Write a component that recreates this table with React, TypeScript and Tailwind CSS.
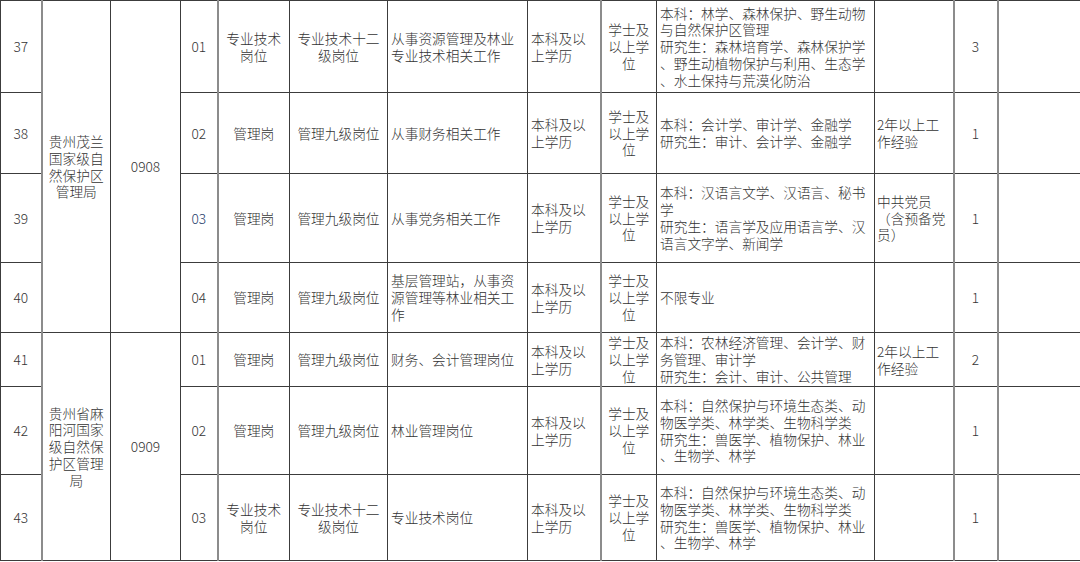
const FONT = { fontFamily: '"Noto Sans CJK SC", "Noto Sans", sans-serif' };

type Row = {
  no: string;
  code: string;
  type: string[];
  level: string[];
  duty: string[];
  edu: string[];
  degree: string[];
  major: string[];
  other: string[];
  count: string;
  h: string;
};

const rows: Row[] = [
  {
    no: "37",
    code: "01",
    type: ["专业技术", "岗位"],
    level: ["专业技术十二", "级岗位"],
    duty: ["从事资源管理及林业", "专业技术相关工作"],
    edu: ["本科及以", "上学历"],
    degree: ["学士及", "以上学", "位"],
    major: [
      "本科：林学、森林保护、野生动物",
      "与自然保护区管理",
      "研究生：森林培育学、森林保护学",
      "、野生动植物保护与利用、生态学",
      "、水土保持与荒漠化防治",
    ],
    other: [],
    count: "3",
    h: "h-[92px]",
  },
  {
    no: "38",
    code: "02",
    type: ["管理岗"],
    level: ["管理九级岗位"],
    duty: ["从事财务相关工作"],
    edu: ["本科及以", "上学历"],
    degree: ["学士及", "以上学", "位"],
    major: ["本科：会计学、审计学、金融学", "研究生：审计、会计学、金融学"],
    other: ["2年以上工", "作经验"],
    count: "1",
    h: "h-[81px]",
  },
  {
    no: "39",
    code: "03",
    type: ["管理岗"],
    level: ["管理九级岗位"],
    duty: ["从事党务相关工作"],
    edu: ["本科及以", "上学历"],
    degree: ["学士及", "以上学", "位"],
    major: [
      "本科：汉语言文学、汉语言、秘书",
      "学",
      "研究生：语言学及应用语言学、汉",
      "语言文字学、新闻学",
    ],
    other: ["中共党员", "（含预备党", "员）"],
    count: "1",
    h: "h-[89px]",
  },
  {
    no: "40",
    code: "04",
    type: ["管理岗"],
    level: ["管理九级岗位"],
    duty: ["基层管理站，从事资", "源管理等林业相关工", "作"],
    edu: ["本科及以", "上学历"],
    degree: ["学士及", "以上学", "位"],
    major: ["不限专业"],
    other: [],
    count: "1",
    h: "h-[70px]",
  },
  {
    no: "41",
    code: "01",
    type: ["管理岗"],
    level: ["管理九级岗位"],
    duty: ["财务、会计管理岗位"],
    edu: ["本科及以", "上学历"],
    degree: ["学士及", "以上学", "位"],
    major: [
      "本科：农林经济管理、会计学、财",
      "务管理、审计学",
      "研究生：会计、审计、公共管理",
    ],
    other: ["2年以上工", "作经验"],
    count: "2",
    h: "h-[54px]",
  },
  {
    no: "42",
    code: "02",
    type: ["管理岗"],
    level: ["管理九级岗位"],
    duty: ["林业管理岗位"],
    edu: ["本科及以", "上学历"],
    degree: ["学士及", "以上学", "位"],
    major: [
      "本科：自然保护与环境生态类、动",
      "物医学类、林学类、生物科学类",
      "研究生：兽医学、植物保护、林业",
      "、生物学、林学",
    ],
    other: [],
    count: "1",
    h: "h-[88px]",
  },
  {
    no: "43",
    code: "03",
    type: ["专业技术", "岗位"],
    level: ["专业技术十二", "级岗位"],
    duty: ["专业技术岗位"],
    edu: ["本科及以", "上学历"],
    degree: ["学士及", "以上学", "位"],
    major: [
      "本科：自然保护与环境生态类、动",
      "物医学类、林学类、生物科学类",
      "研究生：兽医学、植物保护、林业",
      "、生物学、林学",
    ],
    other: [],
    count: "1",
    h: "h-[86px]",
  },
];

const cell = "border border-[#3c3c3c] align-middle p-0";
const grayL = "border-l-2 border-l-[#8c8c8c]";

function Lines({ lines }: { lines: string[] }) {
  return (
    <>
      {lines.map((l, i) => (
        <div key={i}>{l}</div>
      ))}
    </>
  );
}

export default function App() {
  return (
    <div className="w-[1080px] h-[562px] bg-white overflow-hidden" style={FONT}>
      <table className="w-[1080px] table-fixed border-collapse text-[13.7px] leading-[16.8px] font-light text-[#333]">
        <colgroup>
          <col className="w-[41px]" />
          <col className="w-[69px]" />
          <col className="w-[70px]" />
          <col className="w-[37px]" />
          <col className="w-[72px]" />
          <col className="w-[98px]" />
          <col className="w-[140px]" />
          <col className="w-[73px]" />
          <col className="w-[56px]" />
          <col className="w-[218px]" />
          <col className="w-[79px]" />
          <col className="w-[44px]" />
          <col className="w-[83px]" />
        </colgroup>
        <tbody>
          {rows.map((r, i) => (
            <tr key={r.no} className={r.h}>
              <td className={`${cell} text-center`}>{r.no}</td>
              {i === 0 && (
                <td rowSpan={4} className={`${cell} ${grayL} text-center px-1`}>
                  <Lines lines={["贵州茂兰", "国家级自", "然保护区", "管理局"]} />
                </td>
              )}
              {i === 4 && (
                <td rowSpan={3} className={`${cell} ${grayL} text-center px-1`}>
                  <Lines lines={["贵州省麻", "阳河国家", "级自然保", "护区管理", "局"]} />
                </td>
              )}
              {i === 0 && (
                <td rowSpan={4} className={`${cell} text-center`}>
                  0908
                </td>
              )}
              {i === 4 && (
                <td rowSpan={3} className={`${cell} text-center`}>
                  0909
                </td>
              )}
              <td className={`${cell} text-center ${r.no === "39" ? "text-[#27406b]" : ""}`}>{r.code}</td>
              <td className={`${cell} ${grayL} text-center`}>
                <Lines lines={r.type} />
              </td>
              <td className={`${cell} text-center`}>
                <Lines lines={r.level} />
              </td>
              <td className={`${cell} text-left pl-[3px]`}>
                <Lines lines={r.duty} />
              </td>
              <td className={`${cell} text-left pl-[3px]`}>
                <Lines lines={r.edu} />
              </td>
              <td className={`${cell} ${grayL} text-center`}>
                <Lines lines={r.degree} />
              </td>
              <td className={`${cell} text-left pl-[3px] whitespace-nowrap`}>
                <Lines lines={r.major} />
              </td>
              <td className={`${cell} text-left pl-[2px]`}>
                <Lines lines={r.other} />
              </td>
              <td className={`${cell} ${grayL} text-center`}>{r.count}</td>
              <td className={`${cell} ${grayL}`}></td>
            </tr>
          ))}
        </tbody>
      </table>
    </div>
  );
}
